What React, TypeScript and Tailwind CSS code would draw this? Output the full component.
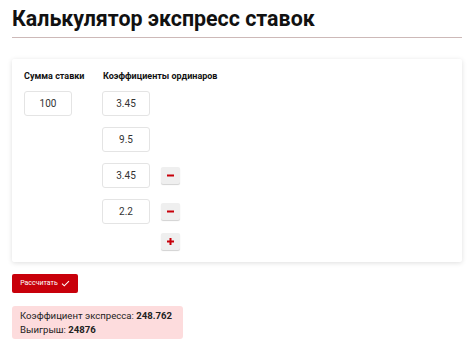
import React from "react";

const Field = ({ v }: { v: string }) => (
  <div className="w-[48px] h-[25px] border border-[#e4e4e4] rounded-[3px] bg-white flex items-center justify-center text-[10px] text-[#333]">
    {v}
  </div>
);

const SmallBtn = ({ plus }: { plus?: boolean }) => (
  <div className="w-[19px] h-[17px] bg-[#efefef] rounded-[2px] shadow-[0_1px_1px_rgba(0,0,0,0.18)] flex items-center justify-center">
    <svg width="9" height="9" viewBox="0 0 9 9">
      <rect x="1" y="3.5" width="7" height="2" fill="#c8000a" />
      {plus && <rect x="3.5" y="1" width="2" height="7" fill="#c8000a" />}
    </svg>
  </div>
);

export default function App() {
  const coefs = ["3.45", "9.5", "3.45", "2.2"];
  return (
    <div className="w-[474px] h-[345px] bg-white px-3 overflow-hidden" style={{ fontFamily: "Roboto, 'Noto Sans', sans-serif" }}>
      <h1 className="mt-[7px] text-[21.4px] leading-[24px] font-bold text-[#111]">Калькулятор экспресс ставок</h1>
      <div className="mt-[6px] h-px bg-[#cdb9b8]" />
      <div className="mt-[21px] bg-white rounded-[2px] shadow-[0_1px_5px_rgba(0,0,0,0.13)] p-3 pb-[12px]">
        <div className="flex">
          <div className="w-[78px] shrink-0">
            <div className="text-[9px] leading-[10px] font-bold text-[#111]">Сумма ставки</div>
            <div className="mt-[10px]">
              <Field v="100" />
            </div>
          </div>
          <div>
            <div className="pl-px text-[9px] leading-[10px] font-bold text-[#111]">Коэффициенты ординаров</div>
            <div className="mt-[10px] flex flex-col gap-[11px]">
              {coefs.map((c, i) => (
                <div key={i} className="flex items-center gap-[11px]">
                  <Field v={c} />
                  {i >= 2 && <SmallBtn />}
                </div>
              ))}
              <div className="pl-[59px] -mt-[2px]">
                <SmallBtn plus />
              </div>
            </div>
          </div>
        </div>
      </div>
      <button className="mt-[12px] h-[19px] w-[66px] bg-[#c8000a] rounded-[2px] text-white text-[7px] flex items-center justify-center gap-[3px]">
        <span>Рассчитать</span>
        <svg width="9" height="7" viewBox="0 0 10 8">
          <path d="M1 4.2 L3.6 6.6 L9 1.2" stroke="white" strokeWidth="1.2" fill="none" />
        </svg>
      </button>
      <div className="mt-[13px] w-[171px] h-[33px] bg-[#fddcdd] rounded-[3px] pl-2 py-[3px] text-[9.6px] leading-[14px] text-[#222] whitespace-nowrap">
        <div>
          Коэффициент экспресса: <b>248.762</b>
        </div>
        <div>
          Выигрыш: <b>24876</b>
        </div>
      </div>
    </div>
  );
}
